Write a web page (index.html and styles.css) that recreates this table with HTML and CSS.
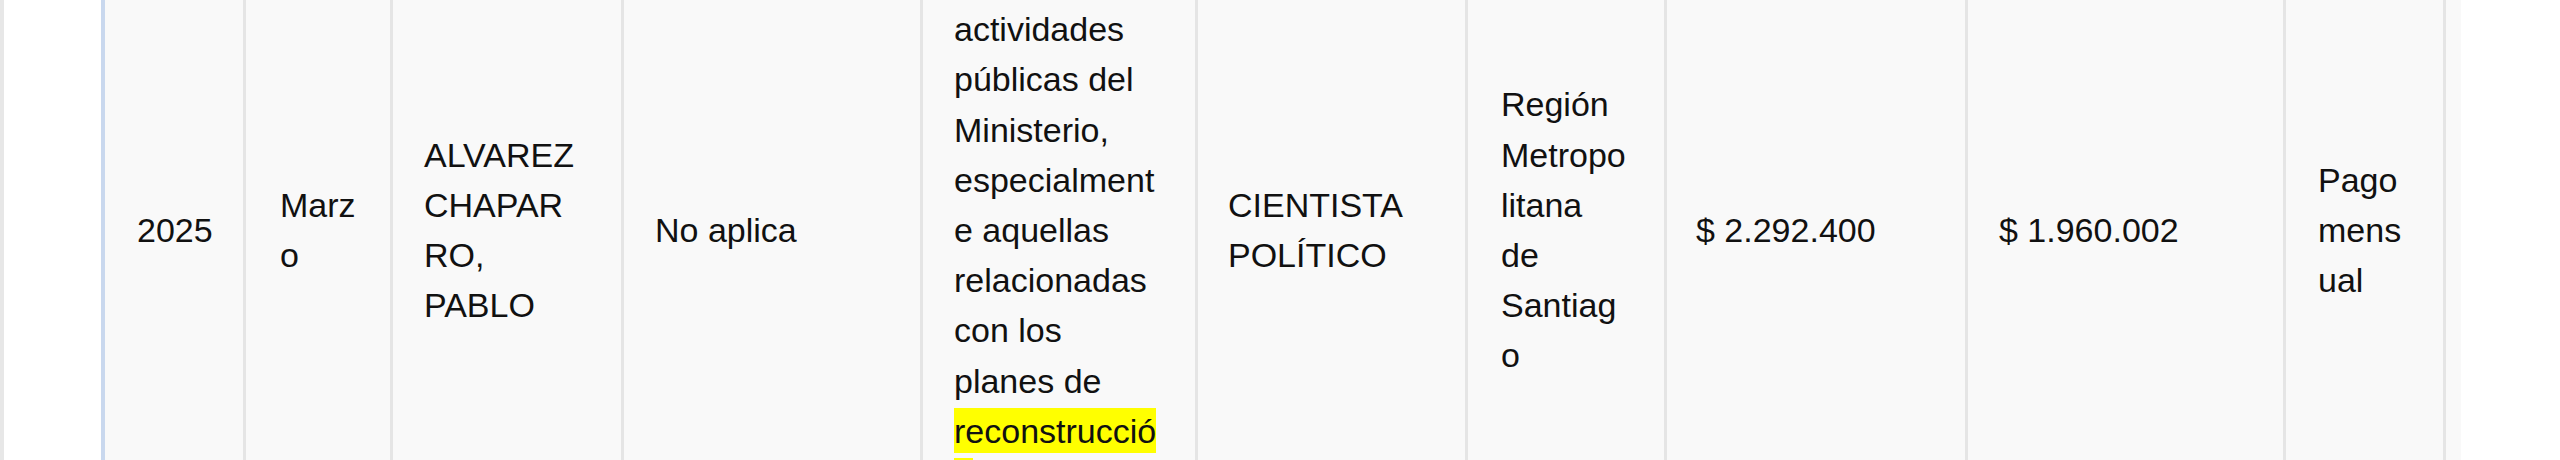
FILE: index.html
```html
<!DOCTYPE html>
<html lang="es">
<head>
<meta charset="utf-8">
<title>Honorarios</title>
<link rel="stylesheet" href="styles.css">
</head>
<body>
<div class="page">
  <div class="table" role="table">
    <div class="row" role="row">
      <div class="cell c-year" role="cell"><div class="txt">2025</div></div>
      <div class="cell c-month" role="cell"><div class="txt">Marzo</div></div>
      <div class="cell c-name" role="cell"><div class="txt">ALVAREZ CHAPARRO, PABLO</div></div>
      <div class="cell c-na" role="cell"><div class="txt">No aplica</div></div>
      <div class="cell c-desc" role="cell"><div class="txt">Difundir las actividades públicas del Ministerio, especialmente aquellas relacionadas con los planes de <mark class="hl">reconstrucción</mark>.</div></div>
      <div class="cell c-prof" role="cell"><div class="txt">CIENTISTA POLÍTICO</div></div>
      <div class="cell c-region" role="cell"><div class="txt">Región Metropolitana de Santiago</div></div>
      <div class="cell c-gross" role="cell"><div class="txt">$ 2.292.400</div></div>
      <div class="cell c-net" role="cell"><div class="txt">$ 1.960.002</div></div>
      <div class="cell c-pay" role="cell"><div class="txt">Pago mensual</div></div>
    </div>
  </div>
</div>
</body>
</html>
```

FILE: styles.css
```css
html, body {
  margin: 0;
  padding: 0;
  background: #ffffff;
}

body {
  width: 2560px;
  height: 460px;
  overflow: hidden;
  font-family: "Liberation Sans", Arial, Helvetica, sans-serif;
  font-size: 34px;
  line-height: 50.2px;
  color: #111111;
}

.page {
  box-sizing: border-box;
  height: 460px;
  display: flex;
  align-items: center;
  padding-left: 97px;
  border-left: 4px solid #e7e7e7;
  background: #ffffff;
}

.table {
  flex: none;
  background: #f9f9f9;
  border-left: 4px solid #c9d8ee;
  padding-right: 15px;
}

.row {
  display: grid;
  grid-template-columns: 138px 147px 231px 299px 275px 270px 199px 301px 318px 163px;
  align-items: stretch;
}

.cell {
  box-sizing: border-box;
  display: flex;
  flex-direction: column;
  justify-content: center;
  padding-top: 12px;
  padding-bottom: 12px;
  padding-right: 20px;
  border-left: 3px solid #e5e5e5;
  overflow-wrap: anywhere;
}

.txt {
  margin: 0;
}

.c-year   { border-left: none; padding-left: 32px; }
.c-month  { padding-left: 34px; }
.c-name   { padding-left: 31px; padding-right: 37px; }
.c-na     { padding-left: 31px; }
.c-desc   { padding-left: 31px; padding-right: 31px; }
.c-prof   { padding-left: 30px; }
.c-region { padding-left: 33px; padding-right: 36.4px; }
.c-gross  { padding-left: 29px; }
.c-net    { padding-left: 31px; }
.c-pay    { padding-left: 32px; padding-right: 32px; border-right: 3px solid #e5e5e5; }

.hl {
  background: #ffff00;
  color: inherit;
  padding: 3.5px 0;
}
```
